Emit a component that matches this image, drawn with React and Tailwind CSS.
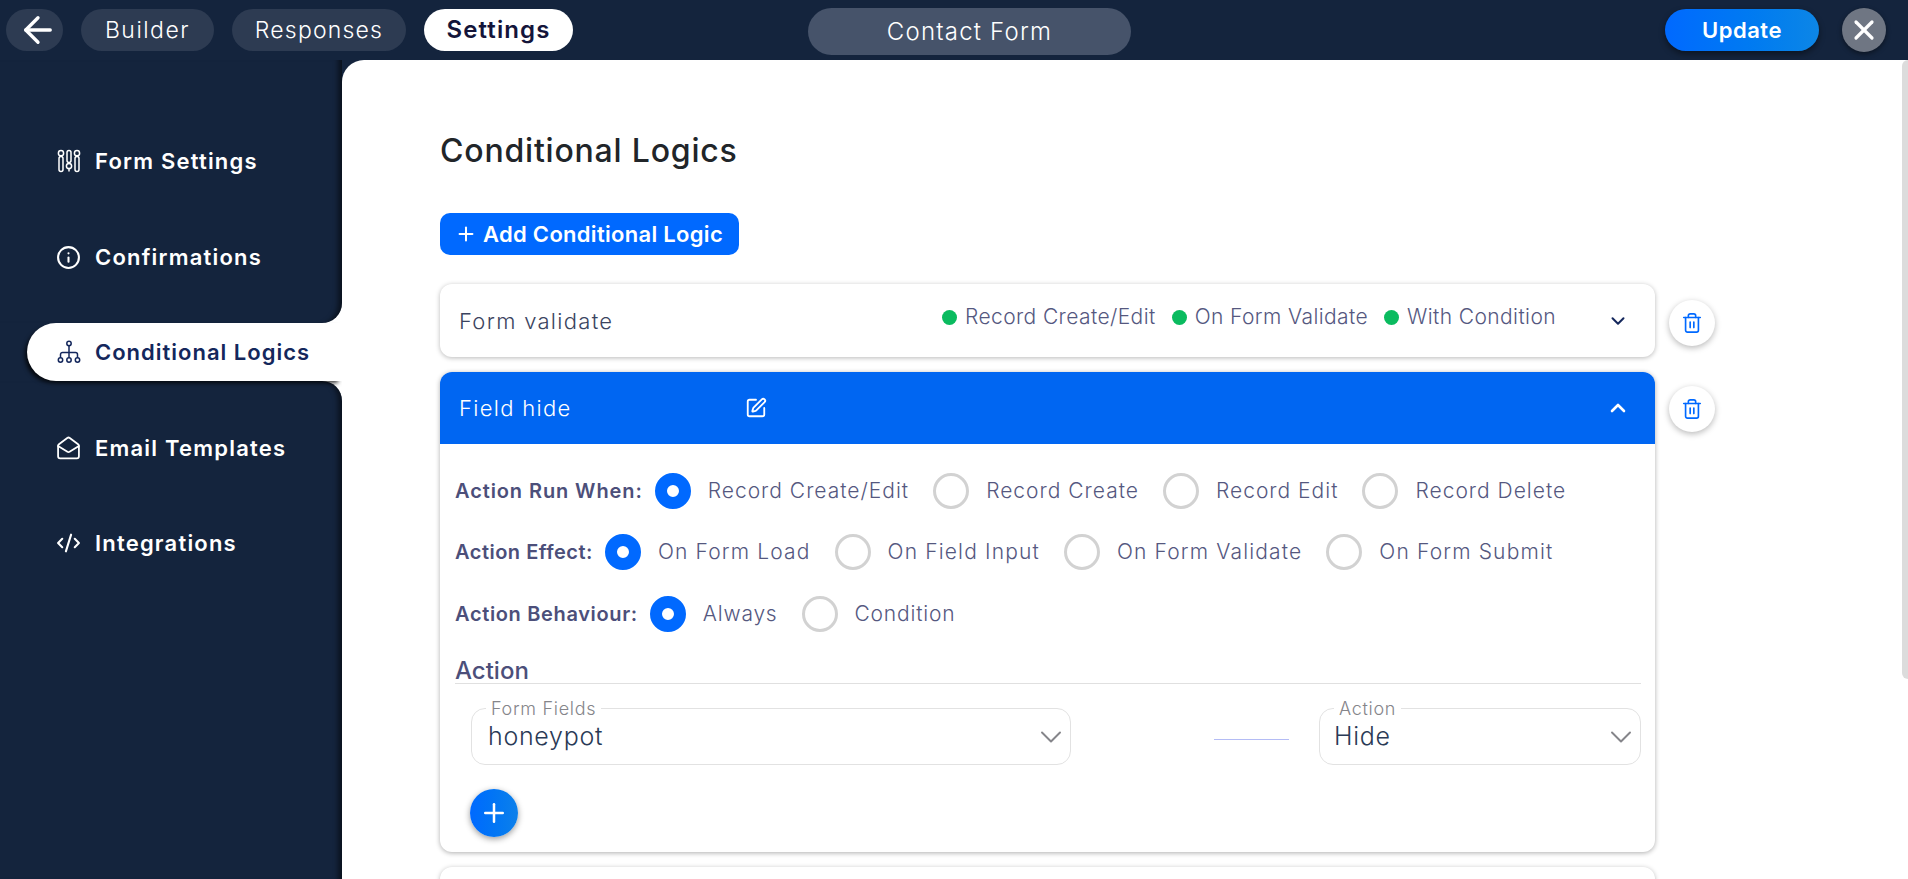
import { ArrowLeft, X, Info, MailOpen, CodeXml, Plus, ChevronDown, ChevronUp, Trash2, SquarePen } from 'lucide-react';

function SlidersIcon() {
  return (
    <svg width="24" height="24" viewBox="0 0 24 24" fill="none" stroke="currentColor" strokeWidth="1.5">
      <rect x="2" y="7.500" width="4" height="15" rx="2" />
      <circle cx="4" cy="4.200" r="2.600" />
      <rect x="10" y="1.500" width="4" height="12" rx="2" />
      <circle cx="12" cy="17" r="2.600" />
      <path d="M12 19.600v2.900" />
      <rect x="18" y="7.500" width="4" height="15" rx="2" />
      <circle cx="20" cy="4.200" r="2.600" />
    </svg>
  );
}

function TreeIcon() {
  return (
    <svg width="24" height="24" viewBox="0 0 24 24" fill="none" stroke="currentColor" strokeWidth="1.5">
      <circle cx="12" cy="3.5" r="2.2" />
      <path d="M12 5.700v12M3.500 18v-3.500a2 2 0 0 1 2-2h13a2 2 0 0 1 2 2V18" />
      <circle cx="3.500" cy="20" r="2.200" />
      <circle cx="12" cy="20" r="2.200" />
      <circle cx="20.500" cy="20" r="2.200" />
    </svg>
  );
}

function NavItem({ icon, label }) {
  return (
    <div className="flex items-center h-[58px] pl-[56px] gap-[14px] text-white text-[22px] font-semibold tracking-[1.2px]">
      <span className="w-[25px] flex justify-center">{icon}</span>
      {label}
    </div>
  );
}

function Radio({ checked, label }) {
  return (
    <div className="flex items-center gap-[17px] text-[21px] font-light text-[#55587f]">
      <span className={checked ? 'w-[36px] h-[36px] rounded-full bg-white border-[12px] border-[#0069ff]' : 'w-[36px] h-[36px] rounded-full bg-white border-[3px] border-[#d2d2d2]'} />
      {label}
    </div>
  );
}

function RadioRow({ label, options, className, labelClass }) {
  return (
    <div className={`flex items-center h-[36px] gap-[24px] ${className}`}>
      <div className="flex items-center gap-[12px]">
        <span className={`text-[20px] font-semibold text-[#4c4f7a] ${labelClass}`}>{label}</span>
        <Radio checked label={options[0]} />
      </div>
      {options.slice(1).map(o => <Radio key={o} label={o} />)}
    </div>
  );
}

function Status({ label }) {
  return (
    <div className="flex items-center gap-[8px] text-[21px] font-light text-[#55587f] tracking-[0.4px]">
      <span className="w-[15px] h-[15px] rounded-full bg-[#0abb5f]" />
      {label}
    </div>
  );
}

function TrashButton({ className }) {
  return (
    <div className={`w-[46px] h-[46px] shrink-0 rounded-full bg-white shadow-[0_2px_6px_rgba(0,0,0,0.28)] flex items-center justify-center text-[#0069ff] ${className}`}>
      <Trash2 size={22} strokeWidth={1.8} />
    </div>
  );
}

function SelectBox({ label, value, className, valueClass }) {
  return (
    <fieldset className={`h-[65px] border border-[#e2e2e2] rounded-[14px] ${className}`}>
      <legend className="ml-[14px] px-[5px] text-[18px] leading-[17px] font-light text-[#85858a] tracking-[0.7px]">{label}</legend>
      <div className={`flex items-center justify-between h-[40px] pr-[1px] ${valueClass}`}>
        <span className="text-[25px] font-light text-[#2a3a56] tracking-[0.7px]">{value}</span>
        <ChevronDown size={36} strokeWidth={1.3} className="text-[#85858a]" />
      </div>
    </fieldset>
  );
}

export default function App() {
  return (
    <div className="h-screen w-full overflow-hidden flex flex-col bg-[#14243d] font-['Inter',sans-serif]">
      <header className="h-[60px] shrink-0 flex items-center relative pl-[6px] pr-[22px]">
        <div className="flex items-center gap-[18px]">
          <div className="w-[57px] h-[42px] pl-[7px] rounded-full bg-[#2d3b52] flex items-center justify-center text-white">
            <ArrowLeft size={42} strokeWidth={1.9} />
          </div>
          <div className="w-[133px] h-[42px] rounded-full bg-[#2d3b52] flex items-center justify-center text-white text-[23px] font-light tracking-[1.5px]">Builder</div>
          <div className="w-[174px] h-[42px] rounded-full bg-[#2d3b52] flex items-center justify-center text-white text-[23px] font-light tracking-[1.2px]">Responses</div>
          <div className="w-[149px] h-[42px] rounded-full bg-white flex items-center justify-center text-[#14153a] text-[24px] font-semibold tracking-[1.1px]">Settings</div>
        </div>
        <div className="ml-[235px] mt-[3px] w-[323px] h-[47px] rounded-full bg-[#46536a] flex items-center justify-center text-white text-[24px] font-light tracking-[1.2px]">Contact Form</div>
        <div className="ml-auto flex items-center gap-[23px]">
          <div className="w-[154px] h-[42px] rounded-full bg-gradient-to-r from-[#0069ff] to-[#0d86e6] shadow-[0_3px_6px_rgba(0,0,0,0.45)] flex items-center justify-center text-white text-[22px] font-semibold tracking-[0.5px]">Update</div>
          <div className="w-[44px] h-[44px] rounded-full bg-[#6f7683] shadow-[0_2px_5px_rgba(0,0,0,0.45)] flex items-center justify-center text-white">
            <X size={32} strokeWidth={2.4} />
          </div>
        </div>
      </header>

      <div className="flex-1 flex min-h-0">
        <aside className="w-[342px] shrink-0 flex flex-col bg-white">
          <div className="h-[263px] shrink-0 bg-[#14243d] rounded-br-[20px] shadow-[inset_-8px_0_5px_-4px_rgba(0,0,0,0.5)] pt-[72px] flex flex-col gap-[38px]">
            <NavItem icon={<SlidersIcon />} label="Form Settings" />
            <NavItem icon={<Info size={25} strokeWidth={2} />} label="Confirmations" />
          </div>
          <div className="h-[58px] shrink-0 bg-[#14243d] pl-[27px] relative z-10">
            <div className="h-full bg-white rounded-l-full shadow-[-3px_3px_4px_-1px_rgba(0,0,0,0.8)] flex items-center pl-[29px] gap-[14px] text-[#14275c] text-[22px] font-semibold tracking-[1px]">
              <span className="w-[25px] flex justify-center"><TreeIcon /></span>
              Conditional Logics
            </div>
          </div>
          <div className="flex-1 bg-[#14243d] rounded-tr-[20px] shadow-[inset_-8px_0_5px_-4px_rgba(0,0,0,0.5)] pt-[38px] flex flex-col gap-[37px]">
            <NavItem icon={<MailOpen size={26} strokeWidth={1.7} />} label="Email Templates" />
            <NavItem icon={<CodeXml size={26} strokeWidth={2} />} label="Integrations" />
          </div>
        </aside>

        <main className="relative z-20 flex-1 min-w-0 flex bg-white rounded-tl-[22px]">
          <div className="flex-1 min-w-0 pl-[98px] pt-[73px] overflow-hidden">
            <h1 className="text-[32px] leading-[36px] font-medium text-[#212529] tracking-[0.8px]">Conditional Logics</h1>

            <div className="mt-[44px] w-[299px] h-[42px] rounded-[10px] bg-[#0069ff] flex items-center pl-[15px] gap-[6px] text-white text-[22px] font-semibold tracking-[0.3px]">
              <Plus size={22} strokeWidth={2.2} />
              Add Conditional Logic
            </div>

            <div className="mt-[29px] flex gap-[14px]">
              <div className="w-[1215px] h-[73px] rounded-[12px] bg-white shadow-[0_1px_5px_rgba(0,0,0,0.28)] flex items-center pl-[19px] pr-[26px]">
                <span className="mt-[1px] text-[22px] font-light text-[#3b4460] tracking-[1.3px]">Form validate</span>
                <div className="ml-auto flex items-center gap-[16px] -mt-[7px]">
                  <Status label="Record Create/Edit" />
                  <Status label="On Form Validate" />
                  <Status label="With Condition" />
                </div>
                <ChevronDown size={22} strokeWidth={2.2} className="ml-[51px] text-[#14275c]" />
              </div>
              <TrashButton className="mt-[16px]" />
            </div>

            <div className="mt-[15px] flex gap-[14px]">
              <div className="w-[1215px] h-[480px] rounded-[12px] bg-white shadow-[0_1px_5px_rgba(0,0,0,0.32)] overflow-hidden">
                <div className="h-[72px] bg-[#0066f2] flex items-center pl-[19px] pr-[25px] text-white">
                  <span className="w-[286px] text-[22px] font-light tracking-[1.3px]">Field hide</span>
                  <SquarePen size={22} strokeWidth={2} />
                  <ChevronUp size={24} strokeWidth={2.6} className="ml-auto" />
                </div>
                <div className="pl-[15px] pr-[14px] pt-[29px]">
                  <RadioRow className="tracking-[1px]" labelClass="tracking-[0.9px]" label="Action Run When:" options={['Record Create/Edit', 'Record Create', 'Record Edit', 'Record Delete']} />
                  <RadioRow className="mt-[25px] tracking-[1.15px]" labelClass="tracking-[0.5px]" label="Action Effect:" options={['On Form Load', 'On Field Input', 'On Form Validate', 'On Form Submit']} />
                  <RadioRow className="mt-[26px] tracking-[0.8px]" labelClass="tracking-[0.65px]" label="Action Behaviour:" options={['Always', 'Condition']} />
                  <div className="mt-[27px] h-[24px] box-content border-b border-[#e0e0e0] text-[24px] leading-[24px] font-medium text-[#4c4f7a]">Action</div>
                  <div className="mt-[16px] pl-[16px] flex items-start">
                    <SelectBox className="w-[600px]" valueClass="pl-[16px]" label="Form Fields" value="honeypot" />
                    <div className="w-[75px] h-[1px] mt-[39px] ml-[143px] bg-[#b4bcf5]" />
                    <SelectBox className="w-[322px] ml-[30px]" valueClass="pl-[14px]" label="Action" value="Hide" />
                  </div>
                  <div className="mt-[24px] ml-[15px] w-[48px] h-[48px] rounded-full bg-gradient-to-r from-[#0069ff] to-[#0d80ea] shadow-[0_2px_6px_rgba(0,0,0,0.4)] flex items-center justify-center text-white">
                    <Plus size={30} strokeWidth={2} />
                  </div>
                </div>
              </div>
              <TrashButton className="mt-[14px]" />
            </div>

            <div className="mt-[15px] w-[1215px] h-[73px] rounded-[12px] bg-white shadow-[0_1px_5px_rgba(0,0,0,0.28)]" />
          </div>
          <div className="w-[6px] shrink-0">
            <div className="h-[619px] bg-[#dcdcdc] rounded-l-[6px]" />
          </div>
        </main>
      </div>
    </div>
  );
}
